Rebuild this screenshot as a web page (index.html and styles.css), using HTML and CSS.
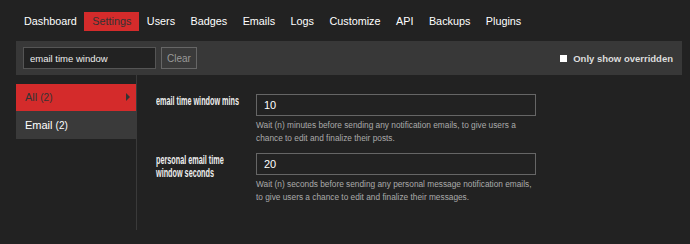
FILE: index.html
```html
<!DOCTYPE html>
<html lang="en">
<head>
    <meta charset="UTF-8">
    <meta name="viewport" content="width=device-width, initial-scale=1.0">
    <title>Admin - Settings</title>
    <link rel="stylesheet" href="styles.css">
</head>
<body>
    <ul class="admin-nav">
        <li><a href="#">Dashboard</a></li>
        <li class="active"><a href="#">Settings</a></li>
        <li><a href="#">Users</a></li>
        <li><a href="#">Badges</a></li>
        <li><a href="#">Emails</a></li>
        <li><a href="#">Logs</a></li>
        <li><a href="#">Customize</a></li>
        <li><a href="#">API</a></li>
        <li><a href="#">Backups</a></li>
        <li><a href="#">Plugins</a></li>
    </ul>

    <div class="admin-container">
        <div class="filter-bar">
            <input type="text" class="filter-input" value="email time window">
            <button class="clear-btn">Clear</button>
            <label class="overridden">
                <span class="check"></span>
                Only show overridden
            </label>
        </div>

        <div class="admin-body">
            <ul class="categories">
                <li class="active"><a href="#">All <span class="count">(2)</span></a><span class="arrow"></span></li>
                <li><a href="#">Email <span class="count">(2)</span></a></li>
            </ul>

            <div class="settings">
                <div class="setting">
                    <div class="setting-label"><h3>email time window mins</h3></div>
                    <div class="setting-value">
                        <input type="text" value="10">
                        <div class="desc">Wait (n) minutes before sending any notification emails, to give users a chance to edit and finalize their posts.</div>
                    </div>
                </div>
                <div class="setting">
                    <div class="setting-label"><h3>personal email time window seconds</h3></div>
                    <div class="setting-value">
                        <input type="text" value="20">
                        <div class="desc">Wait (n) seconds before sending any personal message notification emails, to give users a chance to edit and finalize their messages.</div>
                    </div>
                </div>
            </div>
        </div>
    </div>
</body>
</html>
```

FILE: styles.css
```css
body {
    margin: 0;
    background: #222;
    color: #ddd;
    font-family: 'Liberation Sans', Arial, sans-serif;
}

ul {
    list-style: none;
    margin: 0;
    padding: 0;
}

a {
    text-decoration: none;
}

.admin-nav {
    display: flex;
    padding: 12px 0 0 16px;
    margin-bottom: 10px;
}

.admin-nav a {
    display: block;
    padding: 0 7.5px 0 8px;
    line-height: 19px;
    font-size: 10.8px;
    color: #fff;
}

.admin-nav .active a {
    background: #d42b2b;
    color: #333;
}

.admin-container {
    margin: 0 8px 0 16px;
}

.filter-bar {
    display: flex;
    align-items: center;
    height: 34px;
    padding: 0 9px 0 7px;
    background: #383838;
}

.filter-input {
    box-sizing: border-box;
    width: 133px;
    height: 22px;
    padding: 0 6px;
    background: #222;
    border: 1px solid #555;
    color: #eee;
    font-family: inherit;
    font-size: 9.5px;
    outline: none;
}

.clear-btn {
    box-sizing: border-box;
    height: 22px;
    width: 36px;
    margin-left: 5px;
    padding: 0;
    background: #3a3a3a;
    border: 1px solid #666;
    color: #999;
    font-family: inherit;
    font-size: 10px;
}

.overridden {
    display: flex;
    align-items: center;
    margin-left: auto;
    font-size: 9.5px;
    font-weight: bold;
    color: #ddd;
}

.check {
    width: 7px;
    height: 7px;
    margin-right: 6px;
    background: #fff;
}

.admin-body {
    display: flex;
    height: 155px;
}

.categories {
    width: 120px;
    padding-top: 9px;
    border-right: 1px solid #3a3a3a;
}

.categories li {
    position: relative;
    height: 28px;
    background: #3a3a3a;
}

.categories a {
    display: block;
    padding-left: 9px;
    line-height: 28px;
    font-size: 11px;
    color: #fff;
}

.categories .count {
    font-size: 10px;
}

.categories .active {
    height: 27px;
    background: #d42b2b;
}

.categories .active a {
    line-height: 27px;
    color: #333;
}

.arrow {
    position: absolute;
    right: 6px;
    top: 9px;
    border-left: 4px solid #333;
    border-top: 4px solid transparent;
    border-bottom: 4px solid transparent;
}

.settings {
    padding: 19px 0 0 19px;
}

.setting {
    display: flex;
    margin-bottom: 8px;
}

.setting-label {
    width: 100px;
}

/* no condensed face installed, so squeeze the bold sans */
.setting-label h3 {
    width: 150px;
    margin: 0;
    padding-top: 1px;
    font-size: 12.5px;
    font-weight: bold;
    line-height: 13px;
    color: #eee;
    transform: scaleX(0.58);
    transform-origin: left top;
}

.setting-value input {
    box-sizing: border-box;
    width: 280px;
    height: 22px;
    padding: 0 7px;
    background: #222;
    border: 1px solid #666;
    color: #fff;
    font-family: inherit;
    font-size: 11px;
    outline: none;
}

.desc {
    width: 282px;
    margin-top: 3px;
    font-size: 8.3px;
    line-height: 13px;
    color: #aaa;
}
```
